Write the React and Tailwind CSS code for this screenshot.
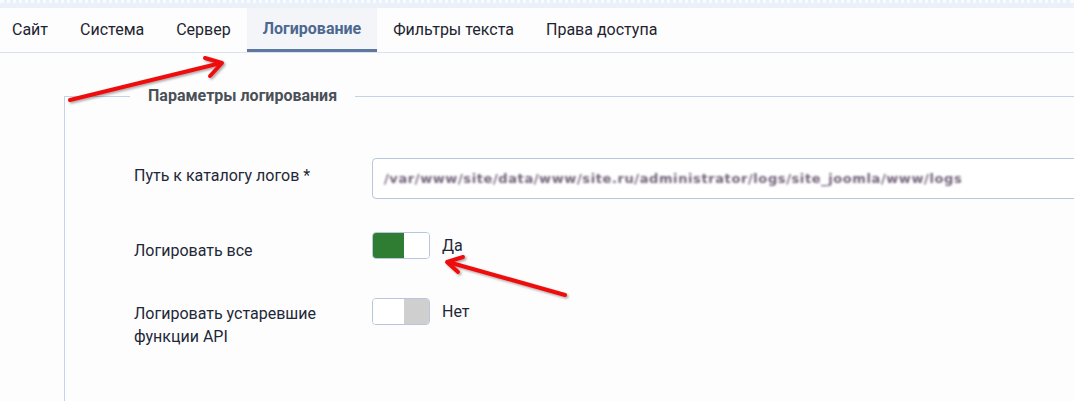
import React from "react";

const tabs = ["Сайт", "Система", "Сервер", "Логирование", "Фильтры текста", "Права доступа"];
const ACTIVE = "Логирование";

function Switch({ on }) {
  return (
    <div className="flex w-[58px] h-[27px] rounded-[4px] border border-[#b6c6de] overflow-hidden bg-white">
      <div className={on ? "w-[31px] bg-[#2e7d32]" : "w-[31px] bg-white"} />
      <div className={on ? "flex-1 bg-white" : "flex-1 bg-[#cfcfcf]"} />
    </div>
  );
}

function Row({ label, children, className = "" }) {
  return (
    <div className={`flex items-start ${className}`}>
      <div className="w-[238px] shrink-0 text-[16px] leading-[23px] text-[#1d2838] pr-4">{label}</div>
      <div className="flex-1">{children}</div>
    </div>
  );
}

export default function App() {
  return (
    <div
      className="relative w-[1074px] h-[401px] overflow-hidden bg-[#fdfdfd]"
      style={{ fontFamily: "Roboto, 'Noto Sans', sans-serif" }}
    >
      {/* top strip */}
      <div className="h-[8px] bg-[#ebf1f9] border-t-[3px] border-dotted border-t-[#f8fbff]" />

      {/* tabs */}
      <div className="flex h-[45px] border-b border-[#d9e3ef] bg-[#fdfdfd]">
        {tabs.map((t) => (
          <div
            key={t}
            className={
              t === ACTIVE
                ? "flex items-center px-4 text-[16px] font-bold text-[#4d6890] bg-[#f3f5f9] border-b-[3px] border-[#5d77a0]"
                : "flex items-center px-4 text-[16px] text-[#1d2430] first:pl-3"
            }
          >
            {t}
          </div>
        ))}
      </div>

      {/* fieldset */}
      <div className="pl-[64px] pt-[31px]">
        <fieldset className="w-[1100px] h-[400px] border border-[#c6d3e6] pl-[69px] pt-[61px]">
          <legend className="-ml-[4px] px-[18px] text-[16px] font-bold text-[#4a5058]">
            Параметры логирования
          </legend>

          <Row label="Путь к каталогу логов *" className="-mt-[5px]">
            <div className="h-[41px] rounded-[4px] border border-[#b9c7de] bg-white flex items-center pl-[11px] -mt-[6px]">
              <span
                className="text-[13px] font-bold tracking-[0.6px] text-[#72627a] blur-[1.2px] select-none"
                style={{ fontFamily: "'DejaVu Sans', sans-serif" }}
              >
                /var/www/site/data/www/site.ru/administrator/logs/site_joomla/www/logs
              </span>
            </div>
          </Row>

          <Row label="Логировать все" className="mt-[40px]">
            <div className="flex items-center -mt-[7px]">
              <Switch on />
              <span className="ml-[12px] text-[16px] text-[#1d2838]">Да</span>
            </div>
          </Row>

          <Row
            label={
              <>
                Логировать устаревшие
                <br />
                функции API
              </>
            }
            className="mt-[40px]"
          >
            <div className="flex items-center -mt-[4px]">
              <Switch on={false} />
              <span className="ml-[12px] text-[16px] text-[#1d2838]">Нет</span>
            </div>
          </Row>
        </fieldset>
      </div>

      {/* annotation arrows */}
      <svg className="absolute inset-0 pointer-events-none" width="1074" height="401">
        <defs>
          <filter id="sh" x="-10%" y="-10%" width="120%" height="120%">
            <feDropShadow dx="1.5" dy="1.5" stdDeviation="1.2" floodColor="#000" floodOpacity="0.35" />
          </filter>
        </defs>
        <g filter="url(#sh)" stroke="#ee1111" strokeWidth="4" strokeLinecap="round" fill="none">
          <path d="M70 100 L221 63" />
          <path d="M205 58 L222 63 L210 76" strokeLinejoin="round" />
          <path d="M565 295 L448 262" />
          <path d="M458 272 L447 262 L463 257" strokeLinejoin="round" />
        </g>
      </svg>
    </div>
  );
}
